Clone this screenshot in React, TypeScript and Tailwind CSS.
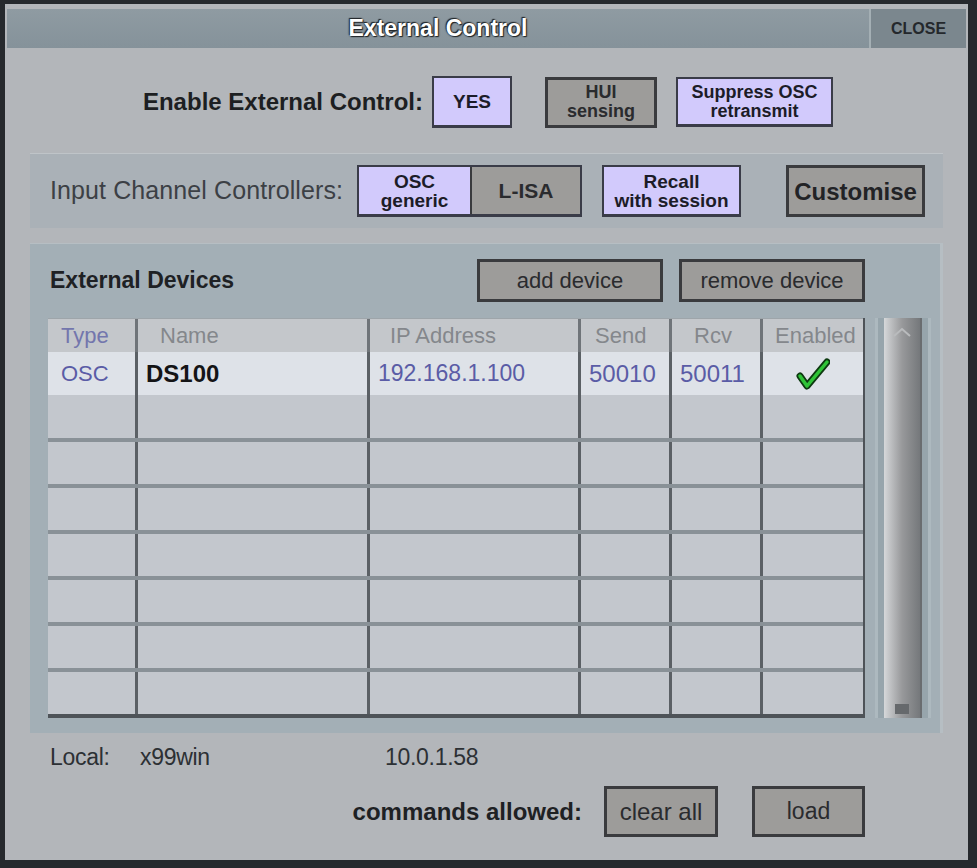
import React from "react";

const lav =
  "bg-[#d2cafc] border-2 border-b-[3px] border-[#3a3c48] flex flex-col items-center justify-center font-bold text-[#1c1c28] leading-[19px]";
const gray =
  "bg-[#9d9c9a] border-[3px] border-[#3a3b3e] flex flex-col items-center justify-center text-[#2a2b2e] leading-[19px]";

const cols = [90, 232, 211, 91, 91, 100];

function Check() {
  return (
    <svg width="34" height="32" viewBox="0 0 34 32">
      <path d="M4 18 L11 28 L31 4" fill="none" stroke="#0d3a10" strokeWidth="7" strokeLinecap="round" strokeLinejoin="round" />
      <path d="M4 18 L11 28 L31 4" fill="none" stroke="#2fc437" strokeWidth="3.5" strokeLinecap="round" strokeLinejoin="round" />
    </svg>
  );
}

function Row({ cells, selected, top }: { cells?: React.ReactNode[]; selected?: boolean; top?: boolean }) {
  return (
    <div
      className={
        "flex " +
        (selected ? "h-[43px] bg-[#dee2e8]" : top ? "h-[43px] bg-[#c3c7cd]" : "h-[46px] bg-[#c3c7cd] border-t-4 border-[#899197]")
      }
    >
      {cols.map((w, i) => (
        <div
          key={i}
          style={{ width: w }}
          className={
            "h-full flex items-center shrink-0 " +
            (i < 5 ? "border-r-[3px] border-[#5b6065] " : "") +
            (i === 5 ? "justify-center" : i === 0 ? "pl-[13px]" : "pl-[8px]")
          }
        >
          {cells ? cells[i] : null}
        </div>
      ))}
    </div>
  );
}

export default function App() {
  const headers = ["Type", "Name", "IP Address", "Send", "Rcv", "Enabled"];
  return (
    <div className="w-[977px] h-[868px] bg-[#26292d] pl-[5px] pt-[4px] pr-[9px] pb-[8px] font-['Liberation_Sans',Arial,sans-serif]">
      <div className="w-full h-full bg-[#b3b6ba] flex flex-col">
        {/* title bar */}
        <div className="mx-[2px] mt-[5px] h-[39px] flex shrink-0">
          <div className="flex-1 bg-linear-to-b from-[#8f9ba2] to-[#85929a] flex items-center justify-center">
            <span className="text-white font-bold text-[23px] [text-shadow:0_0_2px_#1f2326,1px_1px_1px_#1f2326,-1px_-1px_1px_#1f2326]">
              External Control
            </span>
          </div>
          <div className="w-[2px] bg-[#a4afb4]" />
          <div className="w-[95px] bg-[#7b878e] flex items-center justify-center">
            <span className="text-[#24282c] font-bold text-[16px]">CLOSE</span>
          </div>
        </div>

        <div className="px-[25px] flex flex-col">
          {/* row 1 */}
          <div className="mt-[28px] h-[52px] flex items-center">
            <div className="w-[402px] pr-[9px] text-right font-bold text-[24px] text-[#1d1f22]">
              Enable External Control:
            </div>
            <div className={lav + " w-[80px] h-[52px] text-[19px]"}>YES</div>
            <div className={gray + " w-[112px] h-[51px] ml-[33px] font-bold text-[18px]"}>
              <span>HUI</span>
              <span>sensing</span>
            </div>
            <div className={lav + " w-[157px] h-[50px] ml-[19px] text-[18px]"}>
              <span>Suppress OSC</span>
              <span>retransmit</span>
            </div>
          </div>

          {/* panel 2 */}
          <div className="mt-[25px] h-[75px] bg-[#aab1b7] border-t border-[#bfc4c8] flex items-center pl-[20px]">
            <div className="w-[307px] text-[25px] text-[#3c4045] tracking-[0.1px]">Input Channel Controllers:</div>
            <div className="flex h-[52px] border-2 border-b-[3px] border-[#3a3c48]">
              <div className="w-[111px] bg-[#d2cafc] flex flex-col items-center justify-center font-bold text-[19px] leading-[19px] text-[#1c1c28]">
                <span>OSC</span>
                <span>generic</span>
              </div>
              <div className="w-[110px] bg-[#9d9c9a] border-l-2 border-[#3a3b3e] flex items-center justify-center font-bold text-[21px] text-[#2a2b2e]">
                L-ISA
              </div>
            </div>
            <div className={lav + " w-[139px] h-[52px] ml-[20px] text-[19px]"}>
              <span>Recall</span>
              <span>with session</span>
            </div>
            <div className={gray + " w-[139px] h-[52px] ml-[45px] font-bold text-[24px] text-[#222326]"}>Customise</div>
          </div>

          {/* panel 3 */}
          <div className="mt-[15px] h-[490px] bg-[#a3afb6] border-t border-r-[3px] border-[#b6bec3] flex flex-col pt-[15px] pl-[18px]">
            <div className="w-[817px] h-[43px] flex items-center">
              <div className="flex-1 pl-[2px] font-bold text-[23px] text-[#1e2124]">External Devices</div>
              <div className={gray + " w-[186px] h-[43px] text-[22px]"}>add device</div>
              <div className={gray + " w-[186px] h-[43px] ml-[16px] text-[22px]"}>remove device</div>
            </div>

            <div className="mt-[16px] flex">
              <div className="w-[817px] flex flex-col border-r-2 border-b-4 border-[#4e5358] box-border">
                <div className="h-[34px] flex bg-[#c4c7cb] border-t border-[#9ea5aa]">
                  {headers.map((h, i) => (
                    <div
                      key={h}
                      style={{ width: cols[i] }}
                      className={
                        "h-full flex items-center shrink-0 text-[22px] " +
                        (i < 5 ? "border-r-[3px] border-[#6f7479] " : "") +
                        (i === 0 ? "pl-[13px] text-[#7376ad]" : "text-[#84878c] ") +
                        (i === 1 ? " pl-[22px]" : i === 2 ? " pl-[20px]" : i === 3 ? " pl-[14px]" : i === 4 ? " pl-[22px]" : i === 5 ? " pl-[12px]" : "")
                      }
                    >
                      {h}
                    </div>
                  ))}
                </div>
                <Row
                  selected
                  cells={[
                    <span className="text-[22px] text-[#5a5ca6]">OSC</span>,
                    <span className="text-[24px] font-bold text-[#141416]">DS100</span>,
                    <span className="text-[23px] text-[#5a5ca6]">192.168.1.100</span>,
                    <span className="text-[24px] text-[#5a5ca6]">50010</span>,
                    <span className="text-[24px] text-[#5a5ca6]">50011</span>,
                    <Check />,
                  ]}
                />
                <Row top />
                <Row />
                <Row />
                <Row />
                <Row />
                <Row />
                <Row />
              </div>
              <div className="ml-[10px] w-[56px] h-[400px] bg-[#97a5ac] border-x-[3px] border-[#adb9bf] flex justify-center">
                <div className="w-[38px] h-full bg-linear-to-r from-[#d6d8da] via-[#98999b] to-[#75787b] border-r-2 border-[#6a6d70] flex flex-col items-center justify-between">
                  <svg width="22" height="12" viewBox="0 0 22 12" className="mt-[8px]">
                    <path d="M3 10 L11 3 L19 10" fill="none" stroke="#b9bbbd" strokeWidth="2" />
                  </svg>
                  <div className="w-[14px] h-[10px] bg-[#66696c] mb-[4px]" />
                </div>
              </div>
            </div>
          </div>

          {/* local row */}
          <div className="mt-[12px] h-[24px] flex items-center pl-[20px] text-[23px] text-[#2c3034] tracking-[-0.3px]">
            <span className="w-[90px]">Local:</span>
            <span className="w-[245px]">x99win</span>
            <span>10.0.1.58</span>
          </div>

          {/* commands row */}
          <div className="mt-[17px] h-[51px] flex items-center justify-end pr-[78px]">
            <span className="font-bold text-[24px] text-[#1e2124] mr-[22px]">commands allowed:</span>
            <div className={gray + " w-[114px] h-[51px] text-[24px]"}>clear all</div>
            <div className={gray + " w-[113px] h-[51px] ml-[34px] text-[23px]"}>load</div>
          </div>
        </div>
      </div>
    </div>
  );
}
